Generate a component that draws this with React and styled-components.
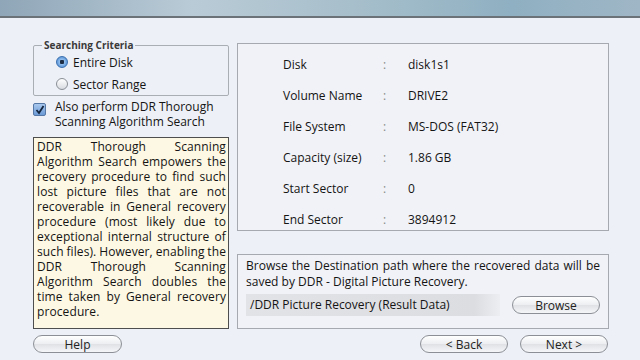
import React from "react";
import styled, { createGlobalStyle } from "styled-components";

const GlobalStyle = createGlobalStyle`
  html, body {
    margin: 0;
    padding: 0;
    width: 640px;
    height: 360px;
    overflow: hidden;
    background: #edf0f6;
    font-family: "Open Sans", "DejaVu Sans", sans-serif;
    color: #141414;
  }
`;

const Page = styled.div`
  width: 640px;
  height: 360px;
  display: flex;
  flex-direction: column;
`;

const Banner = styled.div`
  height: 16px;
  flex-shrink: 0;
  background: linear-gradient(90deg, #8fa6b8 0%, #b9cbd6 30%, #a7bfcb 55%, #8fb0c2 80%, #9fb6c6 100%);
  border-bottom: 2px solid #6b7278;
`;

const Body = styled.div`
  display: grid;
  grid-template-columns: 196px 372px;
  column-gap: 8px;
  padding: 20px 32px 0 33px;
`;

const LeftCol = styled.div`
  display: flex;
  flex-direction: column;
`;

const RightCol = styled.div`
  display: flex;
  flex-direction: column;
  padding-top: 5px;
`;

const GroupBox = styled.fieldset`
  margin: 0;
  padding: 2px 0 6px 22px;
  height: 58px;
  box-sizing: border-box;
  border: 1px solid #a9adb4;
  border-radius: 2px;
  display: flex;
  flex-direction: column;
  gap: 6px;
`;

const Legend = styled.legend`
  font-size: 10px;
  font-weight: bold;
  color: #3a3a3a;
  padding: 0 2px;
  margin-left: -14px;
`;

const RadioRow = styled.label`
  display: flex;
  align-items: center;
  gap: 5px;
  font-size: 12px;
  height: 16px;
`;

const Radio = styled.span`
  width: 12px;
  height: 12px;
  border-radius: 50%;
  box-sizing: border-box;
  border: 1px solid ${(p) => (p.$on ? "#3a6fb0" : "#8a8f96")};
  background: ${(p) =>
    p.$on
      ? "radial-gradient(circle, #1d2d44 0 2px, #8fbcec 2.5px, #3f7fcc 100%)"
      : "linear-gradient(#ffffff, #d8dbe0)"};
`;

const CheckRow = styled.div`
  display: flex;
  align-items: flex-start;
  gap: 9px;
  margin-top: 3px;
  font-size: 12px;
  line-height: 15px;
`;

const CheckBox = styled.span`
  width: 13px;
  height: 13px;
  margin-top: 4px;
  flex-shrink: 0;
  box-sizing: border-box;
  border: 1px solid #5577a6;
  border-radius: 2px;
  background: linear-gradient(#a9c8ee, #6b9ad6);
  display: flex;
  align-items: center;
  justify-content: center;
`;

const InfoBox = styled.div`
  margin-top: 8px;
  height: 192px;
  box-sizing: border-box;
  border: 1px solid #4e4e4e;
  background: #fdf8e3;
  padding: 1px 2px 0 3px;
  font-size: 12px;
  letter-spacing: 0.1px;
  word-spacing: -1px;
  line-height: 15px;
  text-align: justify;
`;

const Panel = styled.div`
  border: 1px solid #a6aab0;
  background: #f1f2f7;
  box-sizing: border-box;
`;

const DetailsPanel = styled(Panel)`
  height: 188px;
  padding: 13px 0 0 45px;
  display: flex;
  flex-direction: column;
  gap: 15px;
`;

const DetailRow = styled.div`
  display: grid;
  grid-template-columns: 100px 25px auto;
  font-size: 12px;
  line-height: 16px;
`;

const Colon = styled.span`
  color: #8a8a8a;
`;

const DestPanel = styled(Panel)`
  margin-top: 23px;
  height: 75px;
  padding: 3px 8px 0 8px;
  font-size: 12px;
  line-height: 16px;
  text-align: justify;
`;

const PathRow = styled.div`
  display: flex;
  align-items: center;
  margin-top: 4px;
  gap: 12px;
`;

const PathField = styled.div`
  width: 254px;
  height: 22px;
  box-sizing: border-box;
  padding: 0 4px;
  display: flex;
  align-items: center;
  background: linear-gradient(90deg, #e2e3e7, #dcdde1 90%, #eceef2);
  font-size: 12px;
`;

const Button = styled.button`
  width: ${(p) => p.$w || 89}px;
  height: 18px;
  border-radius: 9px;
  border: 1px solid #8c9096;
  background: linear-gradient(#ffffff, #eceef1 50%, #dfe1e5 51%, #f5f6f8);
  font-family: "Open Sans", sans-serif;
  font-size: 12px;
  color: #222;
  padding: 0;
  display: flex;
  align-items: center;
  justify-content: center;
`;

const Footer = styled.div`
  display: flex;
  justify-content: space-between;
  padding: 6px 32px 0 33px;
`;

const NavGroup = styled.div`
  display: flex;
  gap: 12px;
`;

const details = [
  ["Disk", "disk1s1"],
  ["Volume Name", "DRIVE2"],
  ["File System", "MS-DOS (FAT32)"],
  ["Capacity (size)", "1.86  GB"],
  ["Start Sector", "0"],
  ["End Sector", "3894912"],
];

export default function App() {
  return (
    <Page>
      <GlobalStyle />
      <Banner />
      <Body>
        <LeftCol>
          <GroupBox>
            <Legend>Searching Criteria</Legend>
            <RadioRow>
              <Radio $on />
              Entire Disk
            </RadioRow>
            <RadioRow>
              <Radio />
              Sector Range
            </RadioRow>
          </GroupBox>
          <CheckRow>
            <CheckBox>
              <svg width="10" height="10" viewBox="0 0 10 10">
                <path d="M1.5 5 L4 8 L8.5 1" fill="none" stroke="#13243d" strokeWidth="1.8" />
              </svg>
            </CheckBox>
            <div>
              Also perform DDR Thorough
              <br />
              Scanning Algorithm Search
            </div>
          </CheckRow>
          <InfoBox>
            DDR Thorough Scanning Algorithm Search empowers the recovery procedure to find such lost
            picture files that are not recoverable in General recovery procedure (most likely due to
            exceptional internal structure of such files). However, enabling the DDR Thorough Scanning
            Algorithm Search doubles the time taken by General recovery procedure.
          </InfoBox>
        </LeftCol>
        <RightCol>
          <DetailsPanel>
            {details.map(([k, v]) => (
              <DetailRow key={k}>
                <span>{k}</span>
                <Colon>:</Colon>
                <span>{v}</span>
              </DetailRow>
            ))}
          </DetailsPanel>
          <DestPanel>
            Browse the Destination path where the recovered data will be saved by DDR - Digital Picture
            Recovery.
            <PathRow>
              <PathField>/DDR Picture Recovery (Result Data)</PathField>
              <Button $w={88}>Browse</Button>
            </PathRow>
          </DestPanel>
        </RightCol>
      </Body>
      <Footer>
        <Button>Help</Button>
        <NavGroup>
          <Button $w={88}>&lt; Back</Button>
          <Button $w={88}>Next &gt;</Button>
        </NavGroup>
      </Footer>
    </Page>
  );
}
